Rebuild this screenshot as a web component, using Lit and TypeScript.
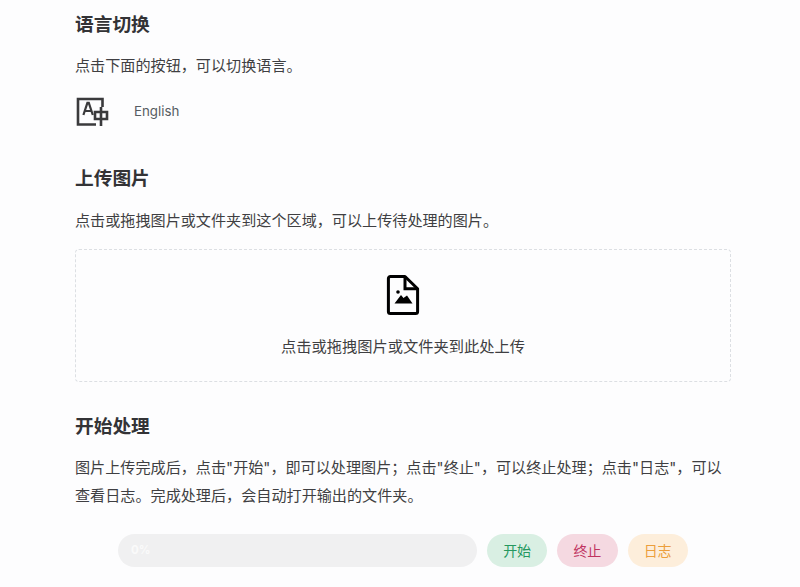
import { LitElement, html, css } from 'lit';
import { customElement } from 'lit/decorators.js';

@customElement('app-root')
export class AppRoot extends LitElement {
  static styles = css`
    :host {
      display: block;
      height: 587px;
      overflow: hidden;
      background: #fdfdfe;
      color: #3f3f42;
      font-family: Inter, "Noto Sans CJK SC", sans-serif;
    }
    .page {
      width: 656px;
      margin-left: 75px;
    }
    h3 {
      margin: 0;
      font-size: 18.72px;
      line-height: 28px;
      font-weight: 700;
      color: #333336;
    }
    p {
      margin: 0;
      font-size: 15.12px;
      line-height: 28px;
    }
    .lang-title { padding-top: 11px; }
    .lang-desc { margin-top: 13px; }
    .lang {
      display: flex;
      align-items: center;
      gap: 25px;
      margin-top: 11px;
      height: 40px;
    }
    .lang svg { display: block; width: 34px; height: 34px; }
    .lang span { font-size: 13.3px; color: #565c62; }
    .upload-title { margin-top: 34px; }
    .upload-desc { margin-top: 14px; }
    .drop {
      box-sizing: border-box;
      height: 133px;
      margin-top: 14px;
      border: 1px dashed #dcdfe3;
      border-radius: 4px;
      display: flex;
      flex-direction: column;
      align-items: center;
    }
    .drop svg { display: block; width: 34px; height: 42px; margin-top: 24px; }
    .drop span { margin-top: 19px; font-size: 15.25px; line-height: 24px; }
    .start-title { margin-top: 31px; }
    .start-desc { margin-top: 13px; }
    .actions {
      display: flex;
      align-items: center;
      gap: 10px;
      margin: 24px 0 0 43px;
    }
    .bar {
      box-sizing: border-box;
      width: 359px;
      height: 33px;
      border-radius: 17px;
      background: #f0f0f1;
      color: #fafafa;
      font-size: 11.5px;
      font-weight: 700;
      line-height: 33px;
      padding-left: 13px;
    }
    button {
      width: 60.25px;
      height: 33px;
      padding: 0 0 2px;
      border: 0;
      border-radius: 17px;
      font-family: inherit;
      font-size: 14px;
    }
    .go { background: #d9efe3; color: #25985f; }
    .stop { background: #f5d9e1; color: #c0335f; }
    .log { background: #fdeedb; color: #ec9f3c; }
  `;

  render() {
    return html`
      <div class="page">
        <h3 class="lang-title">语言切换</h3>
        <p class="lang-desc">点击下面的按钮，可以切换语言。</p>
        <div class="lang">
          <svg viewBox="0 0 34 34" fill="none" stroke="#3a3a3c" stroke-width="2.6">
            <path d="M21 30.5H3V5H27.5V13" />
            <path d="M8.4 21L12.4 8.8H13.8L17.8 21M9.8 17H16.4" stroke-width="2.2" />
            <path d="M20 18H32V25H20ZM26 13V32" />
          </svg>
          <span>English</span>
        </div>
        <h3 class="upload-title">上传图片</h3>
        <p class="upload-desc">点击或拖拽图片或文件夹到这个区域，可以上传待处理的图片。</p>
        <div class="drop">
          <svg viewBox="-1 -1 34 42" fill="none" stroke="#000" stroke-width="3">
            <path d="M18 1.5H3.4a2 2 0 0 0-2 2V36.6a2 2 0 0 0 2 2H28.6a2 2 0 0 0 2-2V13.8Z" stroke-linejoin="round" />
            <path d="M18 1.5V13.8H30.6" />
            <circle cx="11" cy="17" r="1.8" fill="#000" stroke="none" />
            <path d="M7.5 28.5L14 20L16.5 23L20 20.5L25.5 28.5Z" fill="#000" stroke="none" />
          </svg>
          <span>点击或拖拽图片或文件夹到此处上传</span>
        </div>
        <h3 class="start-title">开始处理</h3>
        <p class="start-desc">图片上传完成后，点击"开始"，即可以处理图片；点击"终止"，可以终止处理；点击"日志"，可以查看日志。完成处理后，会自动打开输出的文件夹。</p>
        <div class="actions">
          <div class="bar">0%</div>
          <button class="go">开始</button>
          <button class="stop">终止</button>
          <button class="log">日志</button>
        </div>
      </div>
    `;
  }
}
